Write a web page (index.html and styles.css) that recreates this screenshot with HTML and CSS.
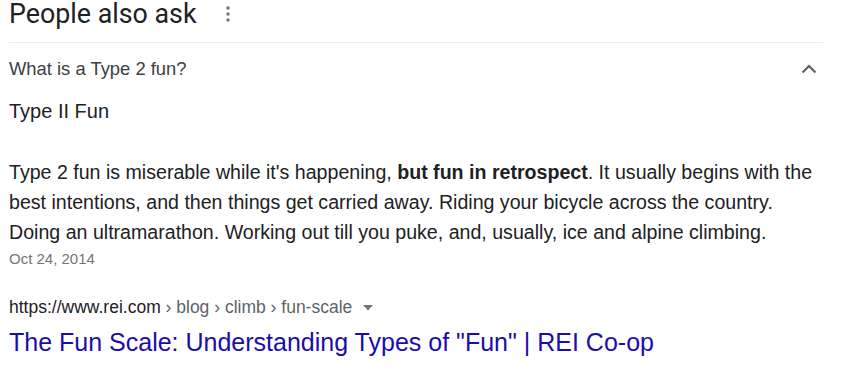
FILE: index.html
```html
<!DOCTYPE html>
<html>
<head>
<meta charset="utf-8">
<link rel="stylesheet" href="styles.css">
</head>
<body>
<div class="paa">
  <div class="paa-head">
    <h2 class="paa-title">People also ask</h2>
    <svg class="kebab" width="4" height="16" viewBox="0 0 4 16"><rect x="0.5" y="0.5" width="3" height="3" fill="#70757a"/><rect x="0.5" y="6.5" width="3" height="3" fill="#70757a"/><rect x="0.5" y="12.5" width="3" height="3" fill="#70757a"/></svg>
  </div>
  <div class="question">
    <span class="q-text">What is a Type 2 fun?</span>
    <svg class="chev" width="16" height="10" viewBox="0 0 16 10"><path d="M1.5 8.5 L8 2 L14.5 8.5" fill="none" stroke="#5f6368" stroke-width="2.2"/></svg>
  </div>
  <div class="answer">
    <div class="ans-head">Type II Fun</div>
    <p class="ans-body">Type 2 fun is miserable while it's happening, <b>but fun in retrospect</b>. It usually begins with the best intentions, and then things get carried away. Riding your bicycle across the country. Doing an ultramarathon. Working out till you puke, and, usually, ice and alpine climbing.</p>
    <div class="date">Oct 24, 2014</div>
    <div class="cite"><span class="host">https://www.rei.com</span> › blog › climb › fun-scale <svg class="tri" width="10" height="6" viewBox="0 0 10 6"><path d="M0 0 L10 0 L5 5.5 Z" fill="#70757a"/></svg></div>
    <a class="title-link" href="#">The Fun Scale: Understanding Types of "Fun" | REI Co-op</a>
  </div>
</div>
</body>
</html>
```
FILE: styles.css
```css
html, body {
  margin: 0;
  padding: 0;
  background: #fff;
}
body {
  font-family: "Liberation Sans", Arial, sans-serif;
  color: #202124;
}
.paa {
  width: 814px;
  padding-left: 9px;
}
.paa-head {
  display: flex;
  align-items: center;
  height: 43px;
  border-bottom: 1px solid #ebebeb;
  box-sizing: border-box;
  padding-bottom: 14px;
}
.paa-title {
  margin: 0;
  font-family: Roboto, "Open Sans", sans-serif;
  font-weight: 400;
  font-size: 26.8px;
  line-height: 28px;
  color: #202124;
}
.kebab {
  margin-left: 29px;
}
.question {
  display: flex;
  align-items: center;
  justify-content: space-between;
  height: 52px;
  padding-right: 6px;
}
.q-text {
  font-size: 18.4px;
  color: #3c4043;
}
.ans-head {
  font-size: 20px;
  line-height: 26px;
  margin-top: 3px;
}
.ans-body {
  margin: 33px 0 0;
  font-size: 19.6px;
  line-height: 30px;
  color: #202124;
}
.ans-body b {
  font-weight: 700;
}
.date {
  font-size: 15px;
  line-height: 20px;
  color: #70757a;
  margin-top: 2px;
}
.cite {
  margin-top: 26px;
  font-size: 17.5px;
  line-height: 24px;
  color: #5f6368;
}
.host {
  color: #202124;
}
.tri {
  margin-left: 6px;
  vertical-align: 2px;
}
.title-link {
  display: block;
  margin-top: 8px;
  font-size: 25px;
  line-height: 30px;
  color: #1a0dab;
  text-decoration: none;
}
```
